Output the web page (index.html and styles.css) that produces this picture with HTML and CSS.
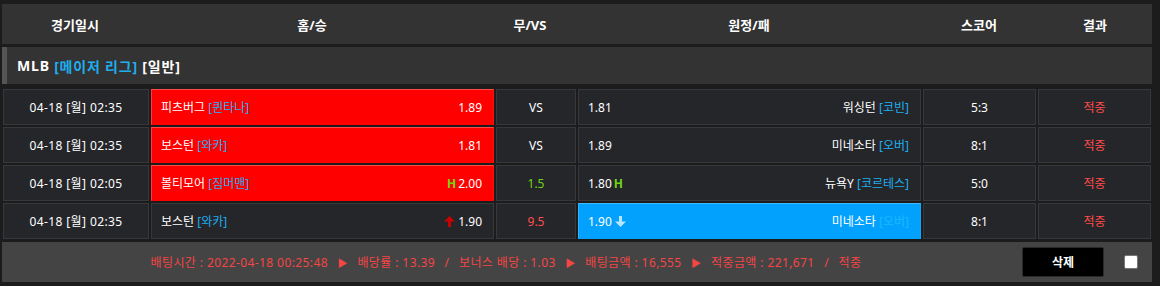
FILE: index.html
```html
<!DOCTYPE html>
<html lang="ko">
<head>
<meta charset="utf-8">
<link rel="stylesheet" href="styles.css">
</head>
<body>
<div class="board">
  <div class="thead">
    <div>경기일시</div>
    <div>홈/승</div>
    <div>무/VS</div>
    <div>원정/패</div>
    <div>스코어</div>
    <div>결과</div>
  </div>
  <div class="league">MLB <span class="cyan">[메이저 리그]</span> [일반]</div>
  <div class="rows">
    <div class="row">
      <div class="cell date">04-18 [월] 02:35</div>
      <div class="cell team home sel-red"><span>피츠버그 <span class="cyan">[퀸타나]</span></span><span class="odds">1.89</span></div>
      <div class="cell vs">VS</div>
      <div class="cell team away"><span class="odds">1.81</span><span>워싱턴 <span class="cyan">[코빈]</span></span></div>
      <div class="cell score">5:3</div>
      <div class="cell result">적중</div>
    </div>
    <div class="row">
      <div class="cell date">04-18 [월] 02:35</div>
      <div class="cell team home sel-red"><span>보스턴 <span class="cyan">[와카]</span></span><span class="odds">1.81</span></div>
      <div class="cell vs">VS</div>
      <div class="cell team away"><span class="odds">1.89</span><span>미네소타 <span class="cyan">[오버]</span></span></div>
      <div class="cell score">8:1</div>
      <div class="cell result">적중</div>
    </div>
    <div class="row">
      <div class="cell date">04-18 [월] 02:05</div>
      <div class="cell team home sel-red"><span>볼티모어 <span class="cyan">[짐머맨]</span></span><span class="odds"><b class="h">H</b>2.00</span></div>
      <div class="cell vs green">1.5</div>
      <div class="cell team away"><span class="odds">1.80<b class="h">H</b></span><span>뉴욕Y <span class="cyan">[코르테스]</span></span></div>
      <div class="cell score">5:0</div>
      <div class="cell result">적중</div>
    </div>
    <div class="row">
      <div class="cell date">04-18 [월] 02:35</div>
      <div class="cell team home"><span>보스턴 <span class="cyan">[와카]</span></span><span class="odds"><svg class="arr" width="11" height="11" viewBox="0 0 11 11"><path d="M5.5 0 L11 5.5 L7 5.5 L7 11 L4 11 L4 5.5 L0 5.5 Z" fill="#c80000"/></svg>1.90</span></div>
      <div class="cell vs red">9.5</div>
      <div class="cell team away sel-blue"><span class="odds">1.90<svg class="arr" width="11" height="11" viewBox="0 0 11 11"><path d="M4 0 L7 0 L7 5.5 L11 5.5 L5.5 11 L0 5.5 L4 5.5 Z" fill="#b5e6ff"/></svg></span><span>미네소타 <span class="cyan">[오버]</span></span></div>
      <div class="cell score">8:1</div>
      <div class="cell result">적중</div>
    </div>
  </div>
  <div class="footer">
    <div class="info">배팅시간 : 2022-04-18 00:25:48 <span class="tri">▶</span> 배당률 : 13.39 <span class="sl">/</span> 보너스 배당 : 1.03 <span class="tri">▶</span> 배팅금액 : 16,555 <span class="tri">▶</span> 적중금액 : 221,671 <span class="sl">/</span> 적중</div>
    <button class="del">삭제</button>
    <span class="chk"></span>
  </div>
</div>
</body>
</html>
```
FILE: styles.css
```css
html, body {
  margin: 0;
  padding: 0;
  background: #1c1c1c;
}
body {
  font-family: "Noto Sans", "Noto Sans CJK KR", sans-serif;
  font-size: 12px;
  color: #fff;
}
.board {
  width: 1150px;
  padding: 4px 0 0 2px;
  display: flex;
  flex-direction: column;
}
.thead {
  height: 40px;
  background: #333;
  display: grid;
  grid-template-columns: 146px 328px 108px 330px 130px 102px;
  align-items: center;
  font-size: 13px;
  font-weight: bold;
  text-align: center;
}
.league {
  margin-top: 3px;
  height: 37px;
  background: #333;
  border-left: 5px solid #555;
  padding-left: 10px;
  display: flex;
  align-items: center;
  font-size: 14px;
  font-weight: bold;
  letter-spacing: 0.8px;
  white-space: pre;
}
.cyan { color: #1eaef0; }
.rows {
  margin-top: 5px;
  padding-left: 1px;
  width: 1148px;
  display: flex;
  flex-direction: column;
  gap: 2px;
}
.row {
  height: 36px;
  display: grid;
  grid-template-columns: 146px 343px 80px 343px 113px 113px;
  gap: 2px;
}
.cell {
  box-sizing: border-box;
  background: #25262a;
  border: 1px solid #37383c;
  display: flex;
  align-items: center;
  justify-content: center;
  white-space: pre;
}
.date { letter-spacing: 0.4px; }
.team {
  justify-content: space-between;
  padding: 0 11px 0 9px;
}
.sel-red {
  background: #ff0000;
  border-color: #ff4a4a #ff1010 #ff0000 #ff3a3a;
}
.sel-blue {
  background: #03a1fe;
  border-color: #40bbff #10a8ff #03a1fe #30b4ff;
}
.sel-blue .cyan { color: #19b8ff; }
.odds {
  display: flex;
  align-items: center;
}
.h {
  color: #6fd615;
  font-weight: bold;
  margin: 0 2px;
}
.arr { margin: 0 3px; }
.green { color: #6fd615; }
.red { color: #ff4e4e; }
.result { color: #ff4b4b; }
.footer {
  margin-top: 3px;
  height: 40px;
  background: #444;
  display: flex;
  align-items: center;
}
.info {
  flex: 1;
  text-align: center;
  color: #f54545;
  letter-spacing: 0.4px;
  white-space: pre;
}
.tri { font-size: 10px; margin: 0 6px; }
.sl { margin: 0 6px; }
.del {
  width: 82px;
  height: 30px;
  margin: 0 20px 0 12px;
  background: #000;
  border: 1px solid #2a2a2a;
  border-radius: 2px;
  color: #fff;
  font-family: inherit;
  font-size: 12px;
  font-weight: bold;
}
.chk {
  width: 12px;
  height: 12px;
  background: #fff;
  border: 1px solid #777;
  border-radius: 2px;
  margin-right: 14px;
}
```
